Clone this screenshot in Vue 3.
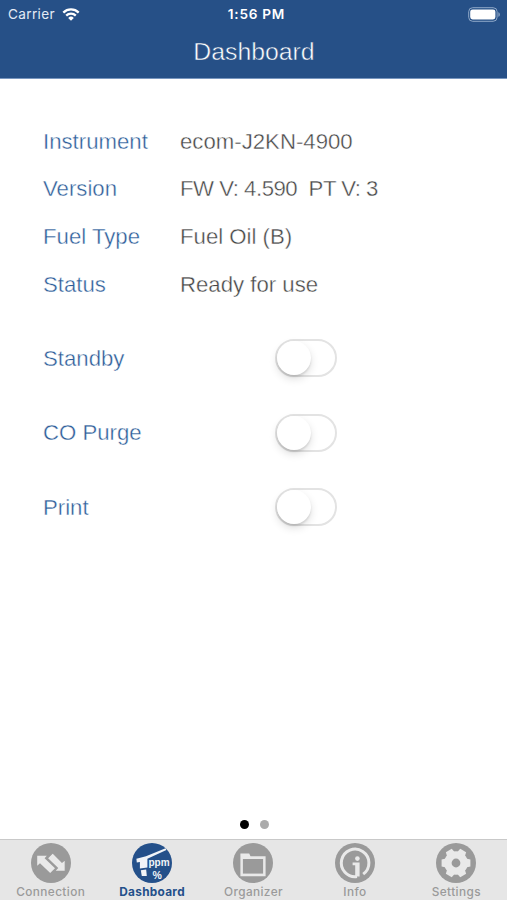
<script setup>
import { ref } from 'vue'

const readings = [
  { label: 'Instrument', value: 'ecom-J2KN-4900' },
  { label: 'Version', value: 'FW V: 4.590  PT V: 3', tight: true },
  { label: 'Fuel Type', value: 'Fuel Oil (B)' },
  { label: 'Status', value: 'Ready for use' },
]

const switches = ref([
  { label: 'Standby', on: false },
  { label: 'CO Purge', on: false },
  { label: 'Print', on: false },
])

const tabs = ['Connection', 'Dashboard', 'Organizer', 'Info', 'Settings']
const active = ref('Dashboard')
const teeth = [30, 90, 150, 210, 270, 330]
</script>

<template>
  <div class="screen">
    <header class="header">
      <div class="status">
        <div class="carrier">
          <span>Carrier</span>
          <svg class="wifi" viewBox="0 0 18 13">
            <path d="M1.3 4.6a11 11 0 0 1 15.4 0" />
            <path d="M4.2 7.6a6.8 6.8 0 0 1 9.6 0" />
            <path class="dot" d="M9 12.8 6.2 9.9a4 4 0 0 1 5.6 0z" />
          </svg>
        </div>
        <div class="clock">1:56 PM</div>
        <div class="power">
          <svg class="battery" viewBox="0 0 33 15">
            <rect class="shell" x="0.7" y="0.7" width="28.4" height="13.6" rx="4" />
            <rect class="charge" x="2.2" y="2.4" width="25.2" height="10" rx="2.4" />
            <path class="cap" d="M30.4 5.2c1.9.7 1.9 3.9 0 4.6z" />
          </svg>
        </div>
      </div>
      <h1 class="title">Dashboard</h1>
    </header>

    <main class="content">
      <dl class="readings">
        <div v-for="r in readings" :key="r.label" class="reading">
          <dt class="label">{{ r.label }}</dt>
          <dd class="value" :class="{ tight: r.tight }">{{ r.value }}</dd>
        </div>
      </dl>
      <div class="switches">
        <div v-for="s in switches" :key="s.label" class="switch-row">
          <span class="label">{{ s.label }}</span>
          <button class="toggle" :class="{ on: s.on }" @click="s.on = !s.on"><span class="knob"></span></button>
        </div>
      </div>
      <div class="pager"><i class="page current"></i><i class="page"></i></div>
    </main>

    <nav class="tabs">
      <button v-for="t in tabs" :key="t" class="tab" :class="{ active: t === active }" @click="active = t">
        <svg class="icon" viewBox="0 0 40 40">
          <circle class="disc" cx="20" cy="20" r="20" />
          <g v-if="t === 'Connection'" class="light">
            <path d="M6.2 12.7H15.8L13.6 15.2 24 25.2 19.2 30 9 20.2 6.2 22.8z" />
            <path class="front" d="M21.7 9.9 31 19.2 34.3 16.6V28.3H23.3L26.4 25 16.2 15.2z" />
          </g>
          <g v-else-if="t === 'Dashboard'" class="light">
            <path d="M4.4 15.8 14 13.3 33.6 5.2 34.4 6.9 15.4 15.8V24.6L7.9 25.6V19L4.8 19.4z" />
            <path d="M8.8 27.2 14.2 26.4 14.8 33H9.8z" />
            <text class="unit" x="16.4" y="22.6" textLength="21.2" lengthAdjust="spacingAndGlyphs">ppm</text>
            <text class="percent" x="20.4" y="35.5">%</text>
          </g>
          <g v-else-if="t === 'Organizer'">
            <path class="light" d="M7.4 10.4H16.2L17.5 13.2H32.6V33.2H7.4z" />
            <path class="fill" d="M9.9 16H30.1V30.6H9.9z" />
          </g>
          <g v-else-if="t === 'Info'">
            <path class="ring" d="M22 33.6A13.8 13.8 0 1 1 28.2 31.1" />
            <path class="light" d="M17.6 19.4H24.6V33.5H20.2V22.2H17.6z" />
            <circle class="light" cx="22.4" cy="15.6" r="2.3" />
          </g>
          <g v-else>
            <circle class="light" cx="20" cy="20" r="11.8" />
            <path v-for="a in teeth" :key="a" class="light" d="M15.6 10 16.6 5.6H23.4L24.4 10z" :transform="`rotate(${a} 20 20)`" />
            <circle class="fill" cx="20" cy="20" r="4.4" />
          </g>
        </svg>
        <span class="caption">{{ t }}</span>
      </button>
    </nav>
  </div>
</template>

<style>
body { margin: 0; background: #fff; }
</style>

<style scoped>
.screen {
  display: flex;
  flex-direction: column;
  width: 507px;
  height: 900px;
  overflow: hidden;
  background: #fff;
  font-family: "Liberation Sans", Arial, sans-serif;
}
.header {
  box-sizing: border-box;
  height: 79px;
  background: #265087;
  border-bottom: 1px solid #7896bf;
  color: #fff;
}
.status {
  display: grid;
  grid-template-columns: 1fr auto 1fr;
  align-items: center;
  height: 27px;
  padding: 1px 6px 0 8px;
  box-sizing: border-box;
  font: 400 13.6px/26px Inter, sans-serif;
}
.carrier { display: flex; align-items: center; gap: 7px; color: #e3ebf5; letter-spacing: 0.35px; }
.wifi { width: 18px; height: 13px; fill: none; stroke: #fff; stroke-width: 2.3; }
.wifi .dot { fill: #fff; stroke: none; }
.clock { padding-left: 4px; font-weight: 600; letter-spacing: 0.75px; }
.power { display: flex; justify-content: flex-end; }
.battery { width: 33px; height: 15px; }
.shell { fill: none; stroke: #8fa8c8; stroke-width: 1; }
.charge { fill: #fff; }
.cap { fill: #8fa8c8; }
.title {
  margin: 0;
  padding-left: 1px;
  text-align: center;
  font-size: 24.8px;
  font-weight: 400;
  line-height: 49px;
  -webkit-text-stroke: 0.5px #265087;
}
.content { display: flex; flex-direction: column; flex: 1; padding-left: 43px; }
.readings { margin: 0; padding-top: 39px; }
.reading { display: grid; grid-template-columns: 137px 1fr; height: 47.6px; align-items: center; }
.label, .value {
  margin: 0;
  font-size: 22.2px;
  white-space: pre;
  -webkit-text-stroke: 0.4px #fff;
}
.label { color: #2c5c98; }
.value { color: #454545; }
.value.tight { letter-spacing: -0.48px; }
.switches { padding-top: 12.6px; }
.switch-row { display: grid; grid-template-columns: 232px 1fr; align-items: center; height: 74.5px; }
.switch-row .label { padding-top: 1px; }
.toggle {
  box-sizing: border-box;
  display: flex;
  width: 62px;
  height: 38px;
  padding: 0;
  border: 2px solid #e3e3e3;
  border-radius: 19px;
  background: #fff;
}
.toggle.on { justify-content: flex-end; background: #265087; }
.knob {
  width: 34px;
  height: 34px;
  border-radius: 50%;
  background: #fff;
  box-shadow: 0 4px 9px rgba(0, 0, 0, 0.13), 0 2px 2px rgba(0, 0, 0, 0.1);
}
.pager { display: flex; justify-content: center; gap: 11px; margin: auto 0 10px -42px; }
.page { width: 9px; height: 9px; border-radius: 50%; background: #ababab; }
.page.current { background: #000; }
.tabs {
  box-sizing: border-box;
  display: grid;
  grid-template-columns: repeat(5, 1fr);
  height: 61px;
  border-top: 1px solid #c9c9c9;
  background: #e6e6e6;
}
.tab {
  display: flex;
  flex-direction: column;
  align-items: center;
  padding: 3px 0 0;
  border: 0;
  background: none;
  color: #9a9a9a;
}
.icon { width: 40px; height: 40px; flex: none; }
.disc, .fill { fill: currentColor; }
.light { fill: #e9e9e9; }
.front { stroke: currentColor; stroke-width: 1.2; }
.ring { fill: none; stroke: #e9e9e9; stroke-width: 3; }
.caption { padding-top: 1px; font: 500 11.8px/16px Inter, sans-serif; letter-spacing: 0.4px; white-space: nowrap; }
.tab.active { color: #24508a; }
.tab.active .caption { font-weight: 700; letter-spacing: 0.3px; }
.tab.active .light { fill: #f1f4f8; }
.unit { font: 700 10.5px "Liberation Sans", sans-serif; }
.percent { font: 700 10.5px "Liberation Sans", sans-serif; }
</style>
